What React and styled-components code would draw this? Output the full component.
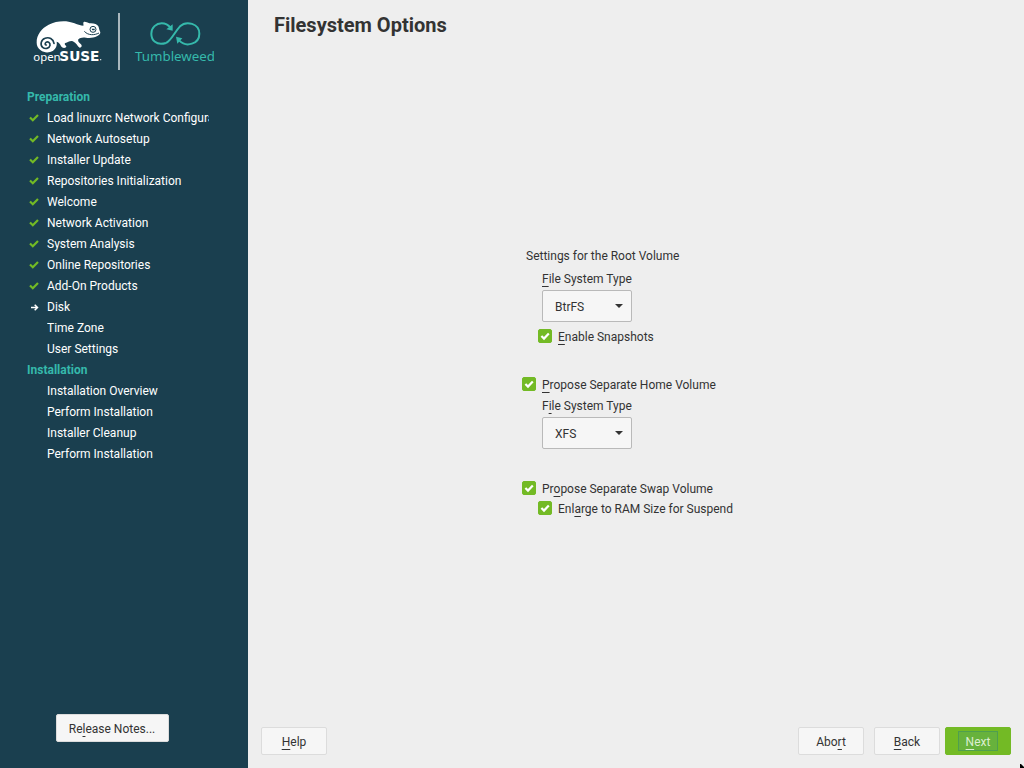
import React from "react";
import styled, { createGlobalStyle, css } from "styled-components";

const GlobalStyle = createGlobalStyle`
  * { box-sizing: border-box; }
  body {
    margin: 0;
    background: #eeeeee;
    color: #333333;
    font-family: Roboto, "Liberation Sans", sans-serif;
    font-size: 12px;
    line-height: 16px;
  }
  button, select, input { font: inherit; color: inherit; margin: 0; }
`;

const Page = styled.div`
  display: flex;
  min-height: 100vh;
`;

const Sidebar = styled.aside`
  flex: none;
  width: 248px;
  display: flex;
  flex-direction: column;
  padding: 13px 33px 26px 27px;
  background: #1a3f4f;
  color: #ffffff;
`;

const Brand = styled.div`
  display: flex;
  height: 57px;
  margin-bottom: 17px;

  svg { display: block; flex: none; }
`;

const BrandRule = styled.div`
  flex: none;
  width: 2px;
  margin: 0 14px 0 15px;
  background: #a9b7bd;
`;

const Steps = styled.nav`
  flex: 1;
  width: 182px;
`;

const StageTitle = styled.h2`
  margin: 0;
  font-size: 12px;
  line-height: 21px;
  font-weight: 700;
  color: #35b9ab;
`;

const StepList = styled.ol`
  margin: 0;
  padding: 0;
  list-style: none;
`;

const Step = styled.li`
  display: grid;
  grid-template-columns: 20px 1fr;
  align-items: center;
  height: 21px;
  line-height: 20px;

  svg { display: block; margin: 0 0 2px 2px; }
`;

const StepName = styled.span`
  grid-column: 2;
  height: 21px;
  overflow: hidden;
  white-space: nowrap;
`;

const Key = styled.u`
  text-decoration-thickness: 1px;
  text-underline-offset: 3px;
  text-decoration-skip-ink: none;
`;

const Button = styled.button`
  height: 28px;
  min-width: 66px;
  padding: 2px 12px 0;
  border: 1px solid #dcdcdc;
  border-radius: 2px;
  background: #f6f6f6;
  color: #333333;
  white-space: nowrap;

  ${(p) =>
    p.$primary &&
    css`
      padding-top: 0;
      border-color: #73ba25;
      background: #73ba25;
      color: #dcefd0;
    `}
`;

const FocusFrame = styled.span`
  display: block;
  height: 20px;
  line-height: 20px;
  padding: 0 6px;
  border: 1px solid #4f9f4f;
  background: #67b23c;
`;

const NotesButton = styled(Button)`
  align-self: center;
  width: 113px;
  margin-right: 18px;
`;

const Main = styled.main`
  flex: 1;
  display: flex;
  flex-direction: column;
  min-width: 0;
`;

const Title = styled.h1`
  margin: 0;
  padding: 13px 26px 0;
  font-size: 20px;
  line-height: 24px;
  font-weight: 700;
`;

const FormArea = styled.div`
  flex: 1;
  display: flex;
  align-items: center;
  justify-content: center;
`;

const Form = styled.form`
  display: flex;
  flex-direction: column;
  gap: 32px;
  width: 228px;
`;

const Group = styled.div`
  display: flex;
  flex-direction: column;
  gap: ${(p) => p.$gap}px;
`;

const GroupTitle = styled.div`
  padding-left: 4px;
`;

const Field = styled.div`
  display: flex;
  flex-direction: column;
  align-items: flex-start;
  gap: 3px;
  padding-left: 20px;
`;

const SelectBox = styled.div`
  display: grid;
  width: 90px;
  height: 32px;
  align-items: center;

  > * { grid-area: 1 / 1; }
  svg { justify-self: end; margin-right: 8px; pointer-events: none; }
`;

const Select = styled.select`
  appearance: none;
  width: 100%;
  height: 100%;
  padding: 2px 24px 0 12px;
  border: 1px solid #b9b9b9;
  border-radius: 2px;
  background: #f6f6f6;
`;

const CheckLabel = styled.label`
  display: flex;
  gap: 6px;
  padding-left: ${(p) => (p.$nested ? 16 : 0)}px;
  white-space: nowrap;
`;

const TickBox = styled.span`
  display: grid;
  flex: none;
  width: 14px;
  height: 14px;

  > * { grid-area: 1 / 1; }
  svg { pointer-events: none; visibility: hidden; }
  input:checked + svg { visibility: visible; }
`;

const TickInput = styled.input`
  appearance: none;
  width: 14px;
  height: 14px;
  border: 1px solid #b9b9b9;
  border-radius: 2px;
  background: #f6f6f6;

  &:checked { border-color: #73ba25; background: #73ba25; }
`;

const Footer = styled.footer`
  display: flex;
  padding: 0 13px 13px;
`;

const Actions = styled.div`
  display: flex;
  gap: 10px;
  margin-left: auto;
  margin-right: 5px;
`;

const Pointer = styled.svg`
  position: fixed;
  right: 0;
  bottom: 0;
`;

function Mnemonic({ text }) {
  const [before, key, after] = text.split(/_(.)/);
  return (
    <span>
      {before}
      <Key>{key}</Key>
      {after}
    </span>
  );
}

function Chameleon() {
  return (
    <svg width="76" height="57" viewBox="9 15 228 171" role="img" aria-label="openSUSE">
      <path
        fill="#fff"
        d="M38 104 C37 80 54 60 74 50 C92 41 114 38 134 41 C152 44 162 51 178 53 C180 51 176 46 179 42 C184 40 190 44 196 46 C210 45 219 49 223 55 C225 60 226 67 229 73 C229 79 225 82 220 84 C208 90 196 91 186 89 C176 87 168 89 163 94 C161 100 164 103 170 108 C175 112 174 118 167 119 C161 116 160 111 157 108 C152 103 148 100 143 99 C135 99 131 104 124 105 C120 107 123 111 127 115 C127 120 119 121 114 118 C110 113 108 107 104 104 C101 102 99 101 98 101 C100 113 95 123 86 129 C76 135 60 135 50 127 C42 121 38 113 38 104 Z"
      />
      <path
        fill="none"
        stroke="#1a3f4f"
        strokeWidth="5"
        strokeLinecap="round"
        d="M90 106 C88 93 75 86 63 91 C50 96 48 111 56 118 C63 124 76 122 78 112 C79 104 72 99 66 103 C62 106 63 111 67 111"
      />
      <circle cx="207" cy="64" r="9" fill="none" stroke="#1a3f4f" strokeWidth="3" />
      <path d="M203 62 H212 V67 H205 Z" fill="#1a3f4f" />
      <path d="M181 70 C193 83 211 82 225 75" fill="none" stroke="#1a3f4f" strokeWidth="3" />
      <text x="28" y="158" fill="#fff" fontFamily="Noto Sans, sans-serif" fontSize="34">
        open
      </text>
      <text x="106" y="158" fill="#fff" fontFamily="DejaVu Sans, sans-serif" fontSize="41" fontWeight="700">
        SUSE
      </text>
      <circle cx="230" cy="155" r="2" fill="#fff" />
    </svg>
  );
}

function Tumbleweed() {
  return (
    <svg width="80" height="57" viewBox="60 15 240 171" role="img" aria-label="Tumbleweed">
      <g fill="none" stroke="#35b9ab" strokeWidth="6">
        <path d="M156 105 C126 114 112 96 112 77 C112 58 127 46 143 46 C155 46 163 51 170 60" />
        <path d="M156 105 C172 98 182 72 198 55 C217 37 256 46 256 77 C256 108 217 119 196 98" />
      </g>
      <path fill="#35b9ab" d="M176 49 V68 L157 64 Z M186 86 L205 91 L190 107 Z" />
      <text x="63" y="159" fill="#35b9ab" fontFamily="Noto Sans, sans-serif" fontSize="40">
        Tumbleweed
      </text>
    </svg>
  );
}

const DoneIcon = () => (
  <svg width="10" height="10" viewBox="0 0 10 10" aria-hidden="true">
    <path d="M1 4.5 L3.8 7.2 L9 2" fill="none" stroke="#73ba25" strokeWidth="2.2" />
  </svg>
);

const CurrentIcon = () => (
  <svg width="10" height="10" viewBox="0 0 10 10" aria-hidden="true">
    <path d="M2 5.5 H8 M5.7 2.7 L8.5 5.5 L5.7 8.3" fill="none" stroke="#fff" strokeWidth="1.5" />
  </svg>
);

const stages = [
  {
    title: "Preparation",
    steps: [
      ["Load linuxrc Network Configuration", "done"],
      ["Network Autosetup", "done"],
      ["Installer Update", "done"],
      ["Repositories Initialization", "done"],
      ["Welcome", "done"],
      ["Network Activation", "done"],
      ["System Analysis", "done"],
      ["Online Repositories", "done"],
      ["Add-On Products", "done"],
      ["Disk", "current"],
      ["Time Zone"],
      ["User Settings"],
    ],
  },
  {
    title: "Installation",
    steps: [
      ["Installation Overview"],
      ["Perform Installation"],
      ["Installer Cleanup"],
      ["Perform Installation"],
    ],
  },
];

function Check({ text, nested }) {
  return (
    <CheckLabel $nested={nested}>
      <TickBox>
        <TickInput type="checkbox" defaultChecked />
        <svg width="14" height="14" viewBox="0 0 14 14" aria-hidden="true">
          <path d="M3.4 7 L6 9.6 L10.8 4.6" fill="none" stroke="#fff" strokeWidth="2.2" />
        </svg>
      </TickBox>
      <Mnemonic text={text} />
    </CheckLabel>
  );
}

function FileSystemField({ id, label, value }) {
  return (
    <Field>
      <label htmlFor={id}>
        <Mnemonic text={label} />
      </label>
      <SelectBox>
        <Select id={id} defaultValue={value}>
          <option>BtrFS</option>
          <option>Ext4</option>
          <option>XFS</option>
        </Select>
        <svg width="10" height="6" viewBox="0 0 10 6" aria-hidden="true">
          <path d="M1 1 H9 L5 5 Z" fill="#333" />
        </svg>
      </SelectBox>
    </Field>
  );
}

export default function App() {
  return (
    <>
      <GlobalStyle />
      <Page>
        <Sidebar>
          <Brand>
            <Chameleon />
            <BrandRule />
            <Tumbleweed />
          </Brand>
          <Steps>
            {stages.map((stage) => (
              <section key={stage.title}>
                <StageTitle>{stage.title}</StageTitle>
                <StepList>
                  {stage.steps.map(([name, state], i) => (
                    <Step key={i}>
                      {state === "done" && <DoneIcon />}
                      {state === "current" && <CurrentIcon />}
                      <StepName>{name}</StepName>
                    </Step>
                  ))}
                </StepList>
              </section>
            ))}
          </Steps>
          <NotesButton type="button">
            <Mnemonic text="Re_lease Notes..." />
          </NotesButton>
        </Sidebar>
        <Main>
          <Title>Filesystem Options</Title>
          <FormArea>
            <Form>
              <Group $gap={7}>
                <GroupTitle>Settings for the Root Volume</GroupTitle>
                <FileSystemField id="root-fs" label="_File System Type" value="BtrFS" />
                <Check text="_Enable Snapshots" nested />
              </Group>
              <Group $gap={5}>
                <Check text="_Propose Separate Home Volume" />
                <FileSystemField id="home-fs" label="F_ile System Type" value="XFS" />
              </Group>
              <Group $gap={4}>
                <Check text="Pr_opose Separate Swap Volume" />
                <Check text="Enl_arge to RAM Size for Suspend" nested />
              </Group>
            </Form>
          </FormArea>
          <Footer>
            <Button type="button">
              <Mnemonic text="_Help" />
            </Button>
            <Actions>
              <Button type="button">
                <Mnemonic text="Abo_rt" />
              </Button>
              <Button type="button">
                <Mnemonic text="_Back" />
              </Button>
            </Actions>
            <Button type="button" $primary>
              <FocusFrame>
                <Mnemonic text="_Next" />
              </FocusFrame>
            </Button>
          </Footer>
        </Main>
      </Page>
      <Pointer width="4" height="4" viewBox="0 0 4 4" aria-hidden="true">
        <path d="M0 0 H1 L4 3 V4 H0 Z" fill="#000" />
      </Pointer>
    </>
  );
}
